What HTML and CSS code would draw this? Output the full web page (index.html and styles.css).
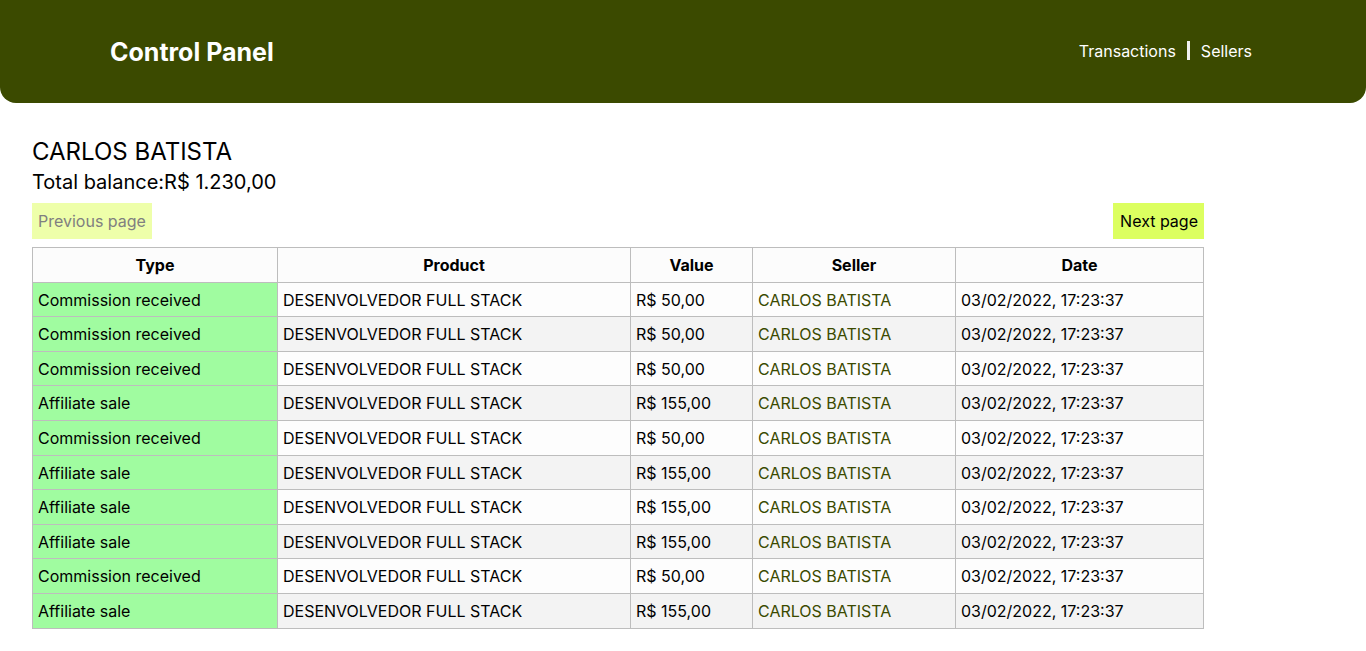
FILE: index.html
```html
<!DOCTYPE html>
<html>
<head>
<meta charset="utf-8">
<link rel="stylesheet" href="styles.css">
</head>
<body>
<header class="topbar">
  <h1 class="brand">Control Panel</h1>
  <nav class="nav">
    <a class="nav-link">Transactions</a>
    <span class="nav-sep"></span>
    <a class="nav-link">Sellers</a>
  </nav>
</header>
<main class="content">
  <h2 class="seller-name">CARLOS BATISTA</h2>
  <p class="balance">Total balance:R$ 1.230,00</p>
  <div class="pager">
    <button class="btn btn-prev">Previous page</button>
    <button class="btn btn-next">Next page</button>
  </div>
  <table class="tx">
    <colgroup>
      <col class="c1"><col class="c2"><col class="c3"><col class="c4"><col class="c5">
    </colgroup>
    <thead>
      <tr><th>Type</th><th>Product</th><th>Value</th><th>Seller</th><th>Date</th></tr>
    </thead>
    <tbody>
      <tr><td class="type">Commission received</td><td>DESENVOLVEDOR FULL STACK</td><td>R$ 50,00</td><td class="seller">CARLOS BATISTA</td><td>03/02/2022, 17:23:37</td></tr>
      <tr><td class="type">Commission received</td><td>DESENVOLVEDOR FULL STACK</td><td>R$ 50,00</td><td class="seller">CARLOS BATISTA</td><td>03/02/2022, 17:23:37</td></tr>
      <tr><td class="type">Commission received</td><td>DESENVOLVEDOR FULL STACK</td><td>R$ 50,00</td><td class="seller">CARLOS BATISTA</td><td>03/02/2022, 17:23:37</td></tr>
      <tr><td class="type">Affiliate sale</td><td>DESENVOLVEDOR FULL STACK</td><td>R$ 155,00</td><td class="seller">CARLOS BATISTA</td><td>03/02/2022, 17:23:37</td></tr>
      <tr><td class="type">Commission received</td><td>DESENVOLVEDOR FULL STACK</td><td>R$ 50,00</td><td class="seller">CARLOS BATISTA</td><td>03/02/2022, 17:23:37</td></tr>
      <tr><td class="type">Affiliate sale</td><td>DESENVOLVEDOR FULL STACK</td><td>R$ 155,00</td><td class="seller">CARLOS BATISTA</td><td>03/02/2022, 17:23:37</td></tr>
      <tr><td class="type">Affiliate sale</td><td>DESENVOLVEDOR FULL STACK</td><td>R$ 155,00</td><td class="seller">CARLOS BATISTA</td><td>03/02/2022, 17:23:37</td></tr>
      <tr><td class="type">Affiliate sale</td><td>DESENVOLVEDOR FULL STACK</td><td>R$ 155,00</td><td class="seller">CARLOS BATISTA</td><td>03/02/2022, 17:23:37</td></tr>
      <tr><td class="type">Commission received</td><td>DESENVOLVEDOR FULL STACK</td><td>R$ 50,00</td><td class="seller">CARLOS BATISTA</td><td>03/02/2022, 17:23:37</td></tr>
      <tr><td class="type">Affiliate sale</td><td>DESENVOLVEDOR FULL STACK</td><td>R$ 155,00</td><td class="seller">CARLOS BATISTA</td><td>03/02/2022, 17:23:37</td></tr>
    </tbody>
  </table>
</main>
</body>
</html>
```
FILE: styles.css
```css
* { box-sizing: border-box; }
html, body { margin: 0; padding: 0; background: #fff; }
body { font-family: Inter, "Noto Sans", sans-serif; color: #000; }

.topbar {
  height: 103px;
  background: #3b4a00;
  border-radius: 0 0 16px 16px;
  display: flex;
  align-items: center;
  justify-content: space-between;
  padding: 0 114px 0 110px;
}
.brand {
  margin: 0;
  font-size: 25px;
  font-weight: 700;
  color: #fff;
}
.nav { display: flex; align-items: center; margin-top: -2px; }
.nav-link { color: #fff; font-size: 16px; }
.nav-sep {
  display: inline-block;
  width: 3px;
  height: 19px;
  background: #f0f0f0;
  margin: 0 11px;
}

.content { padding: 34px 32px 0 32px; width: 1172px; box-sizing: content-box; }
.seller-name {
  margin: 0;
  font-size: 24px;
  font-weight: 400;
  line-height: 30px;
}
.balance {
  margin: 0;
  font-size: 20px;
  line-height: 30px;
}
.pager {
  display: flex;
  justify-content: space-between;
  margin-top: 6px;
}
.btn {
  border: none;
  font-family: inherit;
  font-size: 16px;
  height: 36px;
  padding: 0 6px;
  color: #000;
}
.btn-prev { background: #eeffaa; color: #808080; }
.btn-next { background: #dcff60; padding: 0 6px 0 7px; }

.tx {
  margin-top: 8px;
  border-collapse: collapse;
  width: 1171px;
  table-layout: fixed;
  font-size: 16px;
}
.c1 { width: 245px; }
.c2 { width: 353px; }
.c3 { width: 122px; }
.c4 { width: 203px; }
.c5 { width: 248px; }
.tx th, .tx td {
  border: 1px solid #bdbdbd;
  line-height: 19.6px;
  padding: 8px 5px 6px 5px;
  white-space: nowrap;
}
.tx th { font-weight: 700; text-align: center; background: #fcfcfc; }
.tx td { text-align: left; }
.tx tbody tr:nth-child(odd) { background: #fdfdfd; }
.tx tbody tr:nth-child(even) { background: #f3f3f3; }
.tx td.type { background: #a0fca0; }
.tx td.seller { color: #3b4a00; }
```
